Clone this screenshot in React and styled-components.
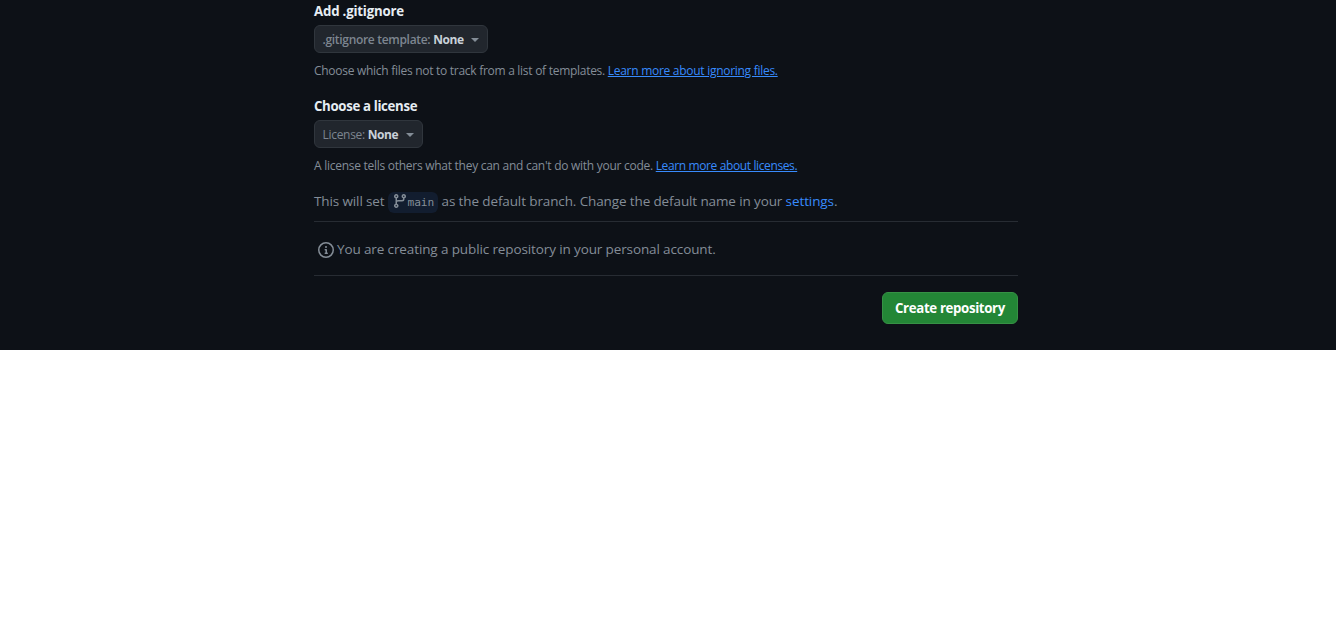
import React from "react";
import styled, { createGlobalStyle } from "styled-components";

const GlobalStyle = createGlobalStyle`
  body {
    margin: 0;
    background: #ffffff;
    font-family: "Open Sans", "Noto Sans", sans-serif;
    font-size: 13.5px;
    line-height: 20px;
  }
`;

const Page = styled.main`
  box-sizing: border-box;
  width: 1336px;
  height: 350px;
  padding: 1px 318px 0 314px;
  background: #0d1117;
  color: #848d97;
  white-space: nowrap;
`;

const Field = styled.section`
  height: 95px;
`;

const Label = styled.h2`
  margin: 0 0 4px;
  color: #e6edf3;
  font-size: 13.25px;
  font-weight: 700;
  line-height: 20px;
  letter-spacing: ${(p) => p.$spacing || "0"};
`;

const SelectButton = styled.button`
  box-sizing: border-box;
  display: flex;
  align-items: center;
  width: ${(p) => p.$width};
  height: 28px;
  padding: 1px 8px 0 7.5px;
  border: 1px solid #30363d;
  border-radius: 6px;
  background: #21262d;
  color: #c9d1d9;
  font: 700 12px/19px "Open Sans", "Noto Sans", sans-serif;
  letter-spacing: -0.5px;
  white-space: nowrap;
`;

const Prefix = styled.span`
  margin-right: 3px;
  color: #7d8590;
  font-weight: ${(p) => p.$weight || 600};
  letter-spacing: ${(p) => p.$spacing || "-0.31px"};
`;

const Caret = styled.span`
  margin: 0 0 0 auto;
  border: 4px solid transparent;
  border-top-color: #848d97;
  border-bottom-width: 0;
`;

const Caption = styled.p`
  margin: 9px 0 0;
  font-size: 12px;
  line-height: 18px;
  letter-spacing: ${(p) => p.$spacing || "-0.28px"};
`;

const Link = styled.a`
  color: #388bfd;
  text-decoration: ${(p) => (p.$underline ? "underline" : "none")};
  letter-spacing: ${(p) => p.$spacing || "inherit"};
`;

const BranchNote = styled.div`
  display: flex;
  align-items: center;
  height: 20px;
  padding-bottom: 10px;
  border-bottom: 1px solid #272c33;
`;

const Phrase = styled.span`
  letter-spacing: ${(p) => p.$spacing || "-0.12px"};
  white-space: pre;
`;

const BranchName = styled.span`
  box-sizing: border-box;
  display: flex;
  align-items: center;
  flex: none;
  width: 50px;
  height: 21px;
  margin: 3px 4px 0 3px;
  padding: 0 4px;
  border-radius: 6px;
  background: #121d2f;
  font: 11.2px/20px "DejaVu Sans Mono", monospace;
  letter-spacing: -0.1px;

  svg {
    margin: -3px 0 0 0;
    flex: none;
  }
`;

const AccountNote = styled.div`
  display: flex;
  align-items: center;
  gap: 3px;
  height: 53px;
  padding-left: 4px;
  border-bottom: 1px solid #272c33;

  svg {
    margin-top: 3px;
  }
`;

const Actions = styled.div`
  display: flex;
  justify-content: flex-end;
  padding-top: 16px;
`;

const CreateButton = styled.button`
  box-sizing: border-box;
  width: 136px;
  height: 32px;
  padding: 0;
  border: 1px solid #369145;
  border-radius: 6px;
  background: #238636;
  color: #ffffff;
  font: 700 13.25px/20px "Open Sans", "Noto Sans", sans-serif;
  letter-spacing: -0.35px;
`;

const BranchIcon = () => (
  <svg width="16" height="16" viewBox="0 0 16 16" fill="#848d97">
    <path d="M9.5 3.25a2.25 2.25 0 1 1 3 2.122V6A2.5 2.5 0 0 1 10 8.5H6a1 1 0 0 0-1 1v1.128a2.251 2.251 0 1 1-1.5 0V5.372a2.25 2.25 0 1 1 1.5 0v1.836A2.493 2.493 0 0 1 6 7h4a1 1 0 0 0 1-1v-.628A2.25 2.25 0 0 1 9.5 3.25Zm-6 0a.75.75 0 1 0 1.5 0 .75.75 0 0 0-1.5 0Zm8.25-.75a.75.75 0 1 0 0 1.5.75.75 0 0 0 0-1.5ZM4.25 12a.75.75 0 1 0 0 1.5.75.75 0 0 0 0-1.5Z" />
  </svg>
);

const InfoIcon = () => (
  <svg width="16" height="16" viewBox="0 0 16 16" fill="#848d97">
    <path d="M0 8a8 8 0 1 1 16 0A8 8 0 0 1 0 8Zm8-6.5a6.5 6.5 0 1 0 0 13 6.5 6.5 0 0 0 0-13ZM6.5 7.75A.75.75 0 0 1 7.25 7h1a.75.75 0 0 1 .75.75v2.75h.25a.75.75 0 0 1 0 1.5h-2a.75.75 0 0 1 0-1.5h.25v-2h-.25a.75.75 0 0 1-.75-.75ZM8 6a1 1 0 1 1 0-2 1 1 0 0 1 0 2Z" />
  </svg>
);

export default function App() {
  return (
    <>
      <GlobalStyle />
      <Page>
        <Field>
          <Label $spacing="-0.2px">Add .gitignore</Label>
          <SelectButton $width="174px">
            <Prefix>.gitignore template:</Prefix>
            None
            <Caret />
          </SelectButton>
          <Caption>
            Choose which files not to track from a list of templates.{" "}
            <Link $underline>Learn more about ignoring files.</Link>
          </Caption>
        </Field>
        <Field>
          <Label $spacing="-0.35px">Choose a license</Label>
          <SelectButton $width="109px">
            <Prefix $weight={500} $spacing="-0.3px">License:</Prefix>
            None
            <Caret />
          </SelectButton>
          <Caption $spacing="-0.27px">
            A license tells others what they can and can't do with your code.{" "}
            <Link $underline $spacing="-0.38px">Learn more about licenses.</Link>
          </Caption>
        </Field>
        <BranchNote>
          <Phrase>This will set</Phrase>
          <BranchName>
            <BranchIcon />
            main
          </BranchName>
          <Phrase>as the default branch. Change the default name in your </Phrase>
          <Link $spacing="-0.1px">settings</Link>
          <Phrase>.</Phrase>
        </BranchNote>
        <AccountNote>
          <InfoIcon />
          <Phrase>You are creating a public repository in your personal account.</Phrase>
        </AccountNote>
        <Actions>
          <CreateButton>Create repository</CreateButton>
        </Actions>
      </Page>
    </>
  );
}
